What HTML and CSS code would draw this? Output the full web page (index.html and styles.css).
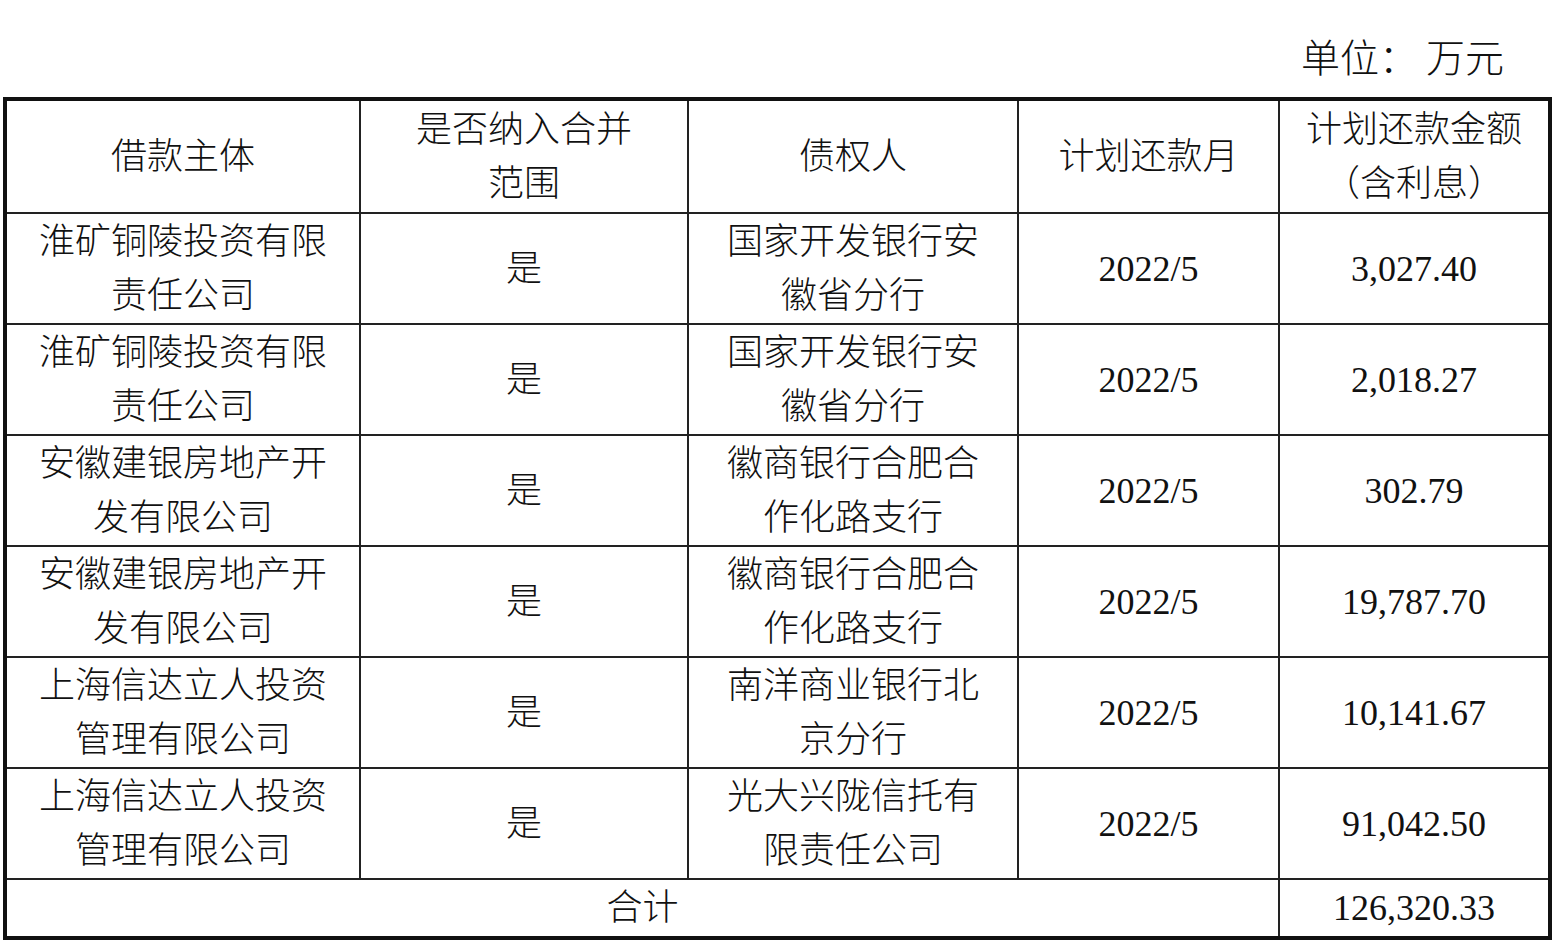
FILE: index.html
```html
<!DOCTYPE html>
<html lang="zh-CN">
<head>
<meta charset="utf-8">
<title>计划还款</title>
<link rel="stylesheet" href="styles.css">
</head>
<body>
<div class="page">
  <div class="unit">单位：<span class="gap"></span>万元</div>
  <table class="grid">
    <colgroup>
      <col class="c1"><col class="c2"><col class="c3"><col class="c4"><col class="c5">
    </colgroup>
    <tr class="head">
      <td>借款主体</td>
      <td>是否纳入合并<br>范围</td>
      <td>债权人</td>
      <td>计划还款月</td>
      <td>计划还款金额<br>（含利息）</td>
    </tr>
    <tr class="row">
      <td>淮矿铜陵投资有限<br>责任公司</td>
      <td>是</td>
      <td>国家开发银行安<br>徽省分行</td>
      <td class="num">2022/5</td>
      <td class="num">3,027.40</td>
    </tr>
    <tr class="row">
      <td>淮矿铜陵投资有限<br>责任公司</td>
      <td>是</td>
      <td>国家开发银行安<br>徽省分行</td>
      <td class="num">2022/5</td>
      <td class="num">2,018.27</td>
    </tr>
    <tr class="row">
      <td>安徽建银房地产开<br>发有限公司</td>
      <td>是</td>
      <td>徽商银行合肥合<br>作化路支行</td>
      <td class="num">2022/5</td>
      <td class="num">302.79</td>
    </tr>
    <tr class="row">
      <td>安徽建银房地产开<br>发有限公司</td>
      <td>是</td>
      <td>徽商银行合肥合<br>作化路支行</td>
      <td class="num">2022/5</td>
      <td class="num">19,787.70</td>
    </tr>
    <tr class="row">
      <td>上海信达立人投资<br>管理有限公司</td>
      <td>是</td>
      <td>南洋商业银行北<br>京分行</td>
      <td class="num">2022/5</td>
      <td class="num">10,141.67</td>
    </tr>
    <tr class="row">
      <td>上海信达立人投资<br>管理有限公司</td>
      <td>是</td>
      <td>光大兴陇信托有<br>限责任公司</td>
      <td class="num">2022/5</td>
      <td class="num">91,042.50</td>
    </tr>
    <tr class="total">
      <td colspan="4">合计</td>
      <td class="num">126,320.33</td>
    </tr>
  </table>
</div>
</body>
</html>
```

FILE: styles.css
```css
html, body {
  margin: 0;
  padding: 0;
  background: #ffffff;
}

body {
  font-family: "Liberation Serif", "Noto Sans CJK SC", serif;
  font-size: 36px;
  color: #111111;
}

.page {
  width: 1562px;
  height: 940px;
  overflow: hidden;
}

.unit {
  height: 97px;
  box-sizing: border-box;
  padding-top: 30px;
  padding-right: 58px;
  text-align: right;
  line-height: 58px;
  font-size: 39px;
  font-weight: 300;
}

.gap {
  display: inline-block;
  width: 8px;
}

.grid {
  margin-left: 3px;
  width: 1545px;
  table-layout: fixed;
  border-collapse: collapse;
  border: 4px solid #111111;
}

.c1 { width: 355px; }
.c2 { width: 328px; }
.c3 { width: 330px; }
.c4 { width: 261px; }
.c5 { width: 271px; }

.grid td {
  border: 2px solid #222222;
  padding: 0;
  text-align: center;
  vertical-align: middle;
  line-height: 54px;
  font-weight: 300;
}

.head td {
  height: 111px;
}

.row td {
  height: 109px;
}

.total td {
  height: 56px;
}

.num {
  font-family: "Liberation Serif", serif;
  font-weight: 400;
}
```
